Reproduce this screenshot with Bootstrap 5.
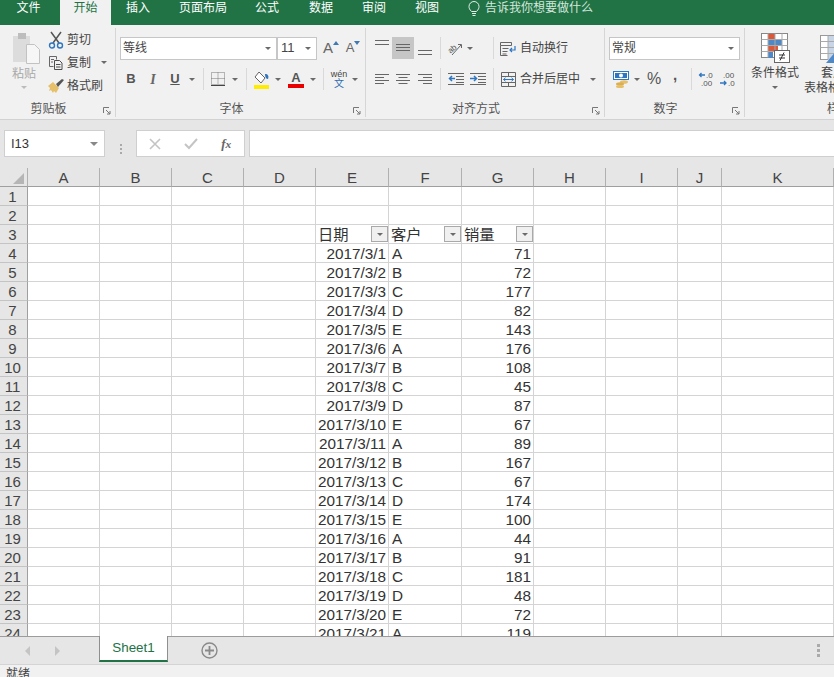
<!DOCTYPE html>
<html lang="zh">
<head>
<meta charset="utf-8">
<title>Excel</title>
<link href="https://cdn.jsdelivr.net/npm/bootstrap@5.3.0/dist/css/bootstrap.min.css" rel="stylesheet">
<style>
html,body{height:100%;}
body{width:834px;height:677px;overflow:hidden;font-family:"Liberation Sans","Noto Sans CJK SC",sans-serif;font-size:12px;color:#444;background:#fff;}
svg{display:block;flex:none;}
.xwin{height:677px;}
.xtabs{height:25px;background:#217346;color:#fff;line-height:15px;flex:none;}
.xtabs>div{text-align:center;padding-top:1px;}
.t1{width:57px;margin-right:3px;}.t2{width:51px;background:#f1f1f1;color:#217346;}.t3{width:54px;}.t4{width:76px;}.t5{width:52px;}.t6{width:56px;}.t7{width:50px;}.t8{width:56px;}
.xtell{margin-left:13px;color:#d5e6dc;gap:5px;}
.xrib{height:95px;background:#f1f1f1;border-bottom:1px solid #d2d2d2;flex:none;overflow:hidden;}
.grp{height:89px;margin-top:3px;border-right:1px solid #d6d6d6;flex:none;position:relative;}
.g1{width:116px;}.g2{width:250px;padding-left:4px;}.g3{width:239px;padding-left:5px;}.g4{width:140px;padding-left:4px;}.g5{width:200px;border-right:0;}
.gbody{height:72px;}
.glabel{height:17px;line-height:19px;text-align:center;padding-right:18px;color:#555;}
.g2 .glabel,.g4 .glabel{padding-right:22px;}
.g3 .glabel{padding-right:23px;}
.g5 .glabel{text-align:left;padding-left:82px;}
.launch{position:absolute;right:4px;bottom:2px;}
.r1{height:22px;margin-top:9px;}
.r2{height:22px;margin-top:9px;}
.slot{display:flex;align-items:center;justify-content:center;height:22px;flex:none;}
.s8{width:8px;}.s10{width:10px;}.s12{width:12px;}.s14{width:14px;}.s16{width:16px;}.s20{width:20px;}.s21{width:21px;}.s22{width:22px;}.s23{width:23px;}.s24{width:24px;}.s26{width:26px;}
.on{background:#c6c6c6;}
.sep{width:1px;height:22px;background:#d9d9d9;}
.tri{width:0;height:0;border-left:3px solid transparent;border-right:3px solid transparent;border-top:3px solid #6a6a6a;flex:none;}
.tri.dim{border-top-color:#bbb;}
.tri.big{border-left-width:4px;border-right-width:4px;border-top-width:4px;border-top-color:#888;}
.xsel{height:23px;background:#fff;border:1px solid #c6c6c6;padding:0 5px 0 2px;line-height:20px;flex:none;}
.fs1{width:157px;}.fs2{width:40px;padding-left:3px;margin-left:0;font-size:13px;}.fs3{width:131px;}
.paste{width:48px;color:#a9a9a9;padding-left:0;}
.clipr{margin-top:4px;margin-left:3px;}
.pastext{margin-top:3px;line-height:15px;}
.pastri{margin-top:4px;}
.clipcol{gap:0;}
.cliprow{height:23px;gap:3px;font-size:12px;}
.copyarr{margin-left:7px;}
.bt{font-size:13px;font-weight:700;color:#555;}
.it{font-family:"Liberation Serif",serif;font-style:italic;font-size:14px;font-weight:700;color:#666;}
.ul{text-decoration:underline;font-size:13px;font-weight:700;color:#555;}
.aup{font-size:15px;color:#666;line-height:22px;width:22px;margin-left:3px;}
.adn{font-size:13px;color:#666;line-height:22px;width:22px;}
.wen{font-size:9px;line-height:9px;text-align:center;color:#444;}
.wen b{display:block;font-weight:400;color:#2b6cb0;font-size:10px;line-height:10px;}
.lbtxt{margin-left:1px;white-space:nowrap;}
.lbgap{margin-left:15px;}
.arrgap{margin-left:9px;}
.pct{font-size:16px;color:#555;}
.cma{font-size:15px;font-weight:700;color:#555;line-height:14px;padding-bottom:8px;}
.cfcol{width:58px;margin-left:1px;text-align:center;line-height:15px;padding-top:5px;}
.cfcol svg{margin:0 auto 3px;}
.cfarrow{margin:5px auto 0;}
.tbcol{width:100px;line-height:15px;padding-top:7px;white-space:nowrap;}
.tbcol svg{margin-left:16px;margin-bottom:3px;}
.tb1{padding-left:17px;}
.xfbar{height:48px;background:#e6e6e6;padding-top:10px;flex:none;}
.fbox{height:27px;background:#fff;border:1px solid #cfcfcf;flex:none;}
.fname{width:101px;margin-left:4px;padding:0 6px 0 6px;font-size:13px;color:#333;}
.fdots{width:31px;gap:2px;flex:none;}
.fdots i{width:2px;height:2px;background:#aaa;display:block;}
.ffx{width:109px;}
.fslot{width:36px;}
.ftx{font-family:"Liberation Serif",serif;font-style:italic;font-weight:700;font-size:13px;color:#666;}
.finput{width:589px;margin-left:4px;flex:none;}
.xgrid{flex:1 1 0;min-height:0;overflow:hidden;background:#fff;}
.xl{width:834px;table-layout:fixed;border-collapse:separate;border-spacing:0;margin:0;font-size:15.3px;color:#333;line-height:16px;}
.xl>*>tr{height:19px;}
.xl>*>tr>*{height:19px;padding:2px 2px 0 3px;border:0;border-right:1px solid #d4d4d4;border-bottom:1px solid #d4d4d4;box-sizing:border-box;overflow:visible;white-space:nowrap;font-weight:400;background:#fff;box-shadow:none;vertical-align:middle;}
.xl>tbody>tr>td.n{text-align:right;padding-left:0;}
.xl>thead>tr>th{background:#e6e6e6;border-right:1px solid #b0b0b0;border-bottom:1px solid #9f9f9f;text-align:center;font-size:15px;color:#444;padding:2px 0 0;}
.xl>tbody>tr>th{background:#e6e6e6;border-right:1px solid #9f9f9f;border-bottom:1px solid #c4c4c4;text-align:center;font-size:15px;color:#444;padding:2px 2px 0 0;}
.c0{width:28px;}.c1{width:72px;}.c2{width:73px;}.c3{width:44px;}.c4{width:112px;}
.corner{margin:0 0 0 13px;}
.xl>tbody>tr>td.hd{padding:0 0 0 2px;}
.fcell{line-height:16px;height:18px;}
.fcell>span:first-child{padding-top:2px;}
.fbtn{width:17px;height:16px;background:#f0f0f0;border:1px solid #a9a9a9;display:flex;align-items:center;justify-content:center;flex:none;}
.xsheets{height:28px;background:#e6e6e6;border-top:1px solid #9c9c9c;flex:none;}
.navs{width:99px;padding-left:25px;gap:23px;}
.stab{width:69px;height:26px;margin-top:-1px;background:#fff;border-left:1px solid #8f8f8f;border-right:1px solid #8f8f8f;border-bottom:2px solid #217346;color:#217346;font-size:13.4px;text-align:center;line-height:24px;flex:none;}
.addsh{margin-left:33px;}
.vdots{margin-left:auto;margin-right:14px;gap:2px;}
.vdots i{width:3px;height:3px;background:#aaa;display:block;}
.xstatus{height:13px;background:#f1f1f1;border-top:1px solid #d4d4d4;flex:none;overflow:hidden;padding:2px 0 0 6px;line-height:15px;color:#444;}
</style>
</head>
<body>
<div class="xwin d-flex flex-column">
  <div class="xtabs d-flex">
    <div class="t1">文件</div><div class="t2">开始</div><div class="t3">插入</div><div class="t4">页面布局</div><div class="t5">公式</div><div class="t6">数据</div><div class="t7">审阅</div><div class="t8">视图</div>
    <div class="xtell d-flex">
      <svg width="12" height="16" viewBox="0 0 12 16" fill="none" stroke="#e4efe8"><path d="M3.5 10.5C1.500 8.500 1 7 1 5.500a5 5 0 0 1 10 0c0 1.500-.5 3-2.500 5zM4 12.500h4M4.500 14.500h3"/></svg>
      <span>告诉我你想要做什么</span>
    </div>
  </div>

  <div class="xrib d-flex">
    <div class="grp g1 d-flex flex-column">
      <div class="gbody d-flex">
        <div class="paste d-flex flex-column align-items-center">
          <svg class="clipr" width="30" height="32" viewBox="0 0 30 32"><rect x="2" y="4" width="17" height="26" fill="#dcdcdc"/><rect x="7" y="1" width="8" height="6" fill="#bdbdbd"/><path d="M15.500 12.500h8l5 5v14h-13z" fill="#f6f6f6" stroke="#c2c2c2"/></svg>
          <div class="pastext">粘贴</div>
          <div class="tri dim pastri"></div>
        </div>
        <div class="clipcol d-flex flex-column">
          <div class="cliprow d-flex align-items-center">
            <svg width="16" height="18" viewBox="0 0 16 18" fill="none"><path d="M3 1l8 11M13 1L5 12" stroke="#555" stroke-width="1.500"/><circle cx="4" cy="14.500" r="2.500" stroke="#2f76c0" stroke-width="1.400"/><circle cx="12" cy="14.500" r="2.500" stroke="#2f76c0" stroke-width="1.400"/></svg>
            <span>剪切</span>
          </div>
          <div class="cliprow d-flex align-items-center">
            <svg width="16" height="16" viewBox="0 0 16 16" fill="none" stroke="#666"><path d="M1.500 1.500h7v3M1.500 1.500v10h4M3 4.500h3M3 7h2"/><path d="M6.500 5.500h5l2.500 2.500v6.500H6.500zM8 9.500h4.500M8 12h4.500" stroke="#4d4d4d"/></svg>
            <span>复制</span>
            <i class="tri copyarr"></i>
          </div>
          <div class="cliprow d-flex align-items-center">
            <svg width="16" height="16" viewBox="0 0 16 16"><path d="M0 8l5-4 6 6-3 5-2-2-1 2-2-3-2 1 1-3-2-2z" fill="#e6bf6a"/><path d="M8 6l6-5 2 1-6 7z" fill="#555"/></svg>
            <span>格式刷</span>
          </div>
        </div>
      </div>
      <div class="glabel">剪贴板</div>
      <svg class="launch" width="8" height="8" viewBox="0 0 8 8" fill="none" stroke="#777"><path d="M.5 6V.5H6"/><path d="M3 3l4 4M7 4v3H4"/></svg>
    </div>

    <div class="grp g2 d-flex flex-column">
      <div class="gbody">
        <div class="r1 d-flex align-items-center">
          <div class="xsel fs1 d-flex align-items-center justify-content-between"><span>等线</span><i class="tri"></i></div>
          <div class="xsel fs2 d-flex align-items-center justify-content-between"><span>11</span><i class="tri"></i></div>
          <div class="aup d-flex justify-content-center"><span>A</span><svg class="mt-1" width="6" height="5" viewBox="0 0 6 5"><path d="M0 4h6L3 0z" fill="#3f78b5"/></svg></div>
          <div class="adn d-flex justify-content-center"><span>A</span><svg class="mt-1" width="6" height="5" viewBox="0 0 6 5"><path d="M0 0h6L3 4z" fill="#3f78b5"/></svg></div>
        </div>
        <div class="r2 d-flex align-items-center">
          <div class="slot s22 bt">B</div><div class="slot s22 it">I</div><div class="slot s22 ul">U</div><div class="slot s12"><i class="tri"></i></div>
          <div class="slot s10"><i class="sep"></i></div>
          <div class="slot s20"><svg width="14" height="14" viewBox="0 0 14 14" fill="none" stroke="#777" stroke-dasharray="1 1"><path d="M.5.500h13v12h-13zM7 .5v12M.5 6.500h13"/><path d="M0 13.500h14" stroke-dasharray="none" stroke="#444"/></svg></div>
          <div class="slot s14"><i class="tri"></i></div>
          <div class="slot s8"><i class="sep"></i></div>
          <div class="slot s22"><svg width="17" height="19" viewBox="0 0 17 19"><path d="M6 2l6 6-4 5-6-6z" fill="#fff" stroke="#666"/><path d="M12 4c3 0 4 2 3 5-2 0-3-2-3-5z" fill="#2f76c0"/><rect x="1" y="15" width="15" height="4" fill="#ffec00"/></svg></div>
          <div class="slot s12"><i class="tri"></i></div>
          <div class="slot s24 flex-column"><span class="bt lh-1">A</span><svg width="16" height="4" viewBox="0 0 16 4"><rect width="16" height="4" fill="#e80000"/></svg></div>
          <div class="slot s10"><i class="tri"></i></div>
          <div class="slot s10"><i class="sep"></i></div>
          <div class="slot s22"><div class="wen">wén<b>文</b></div></div>
          <div class="slot s10"><i class="tri"></i></div>
        </div>
      </div>
      <div class="glabel">字体</div>
      <svg class="launch" width="8" height="8" viewBox="0 0 8 8" fill="none" stroke="#777"><path d="M.5 6V.5H6"/><path d="M3 3l4 4M7 4v3H4"/></svg>
    </div>

    <div class="grp g3 d-flex flex-column">
      <div class="gbody">
        <div class="r1 d-flex align-items-center">
          <div class="slot s21"><svg width="14" height="22" viewBox="0 0 14 22" stroke="#666"><path d="M0 3.500h14M0 7.500h14"/></svg></div>
          <div class="slot s22 on"><svg width="14" height="22" viewBox="0 0 14 22" stroke="#666"><path d="M0 7.500h14M0 10.500h14M0 13.500h14"/></svg></div>
          <div class="slot s22"><svg width="14" height="22" viewBox="0 0 14 22" stroke="#666"><path d="M0 13.500h14M0 17.500h14"/></svg></div>
          <div class="slot s8"><i class="sep"></i></div>
          <div class="slot s22"><svg width="16" height="15" viewBox="0 0 16 15"><text x="1" y="10" transform="rotate(-40 6 8)" font-size="8" font-family="Liberation Sans" fill="#555">ab</text><path d="M5 14L14 4M11 3.500h3.500V7" fill="none" stroke="#666"/></svg></div>
          <div class="slot s8"><i class="tri"></i></div>
          <div class="slot s8 lbgap"><i class="sep"></i></div>
          <div class="slot s22"><svg width="16" height="15" viewBox="0 0 16 15" fill="none"><path d="M.5 1.500h11v3H.5zM.5 4.500v10h7M2.500 7.500h6M2.500 10.500h5M2.500 13h4" stroke="#666"/><path d="M15 5v4h-5M12 7l-2 2 2 2" stroke="#2f76c0" stroke-width="1.200"/></svg></div>
          <div class="lbtxt">自动换行</div>
        </div>
        <div class="r2 d-flex align-items-center">
          <div class="slot s21"><svg width="14" height="10" viewBox="0 0 14 10" stroke="#666"><path d="M0 .5h14M0 3.500h9M0 6.500h14M0 9.500h9"/></svg></div>
          <div class="slot s22"><svg width="14" height="10" viewBox="0 0 14 10" stroke="#666"><path d="M0 .5h14M2.500 3.500h9M0 6.500h14M2.500 9.500h9"/></svg></div>
          <div class="slot s22"><svg width="14" height="10" viewBox="0 0 14 10" stroke="#666"><path d="M0 .5h14M5 3.500h9M0 6.500h14M5 9.500h9"/></svg></div>
          <div class="slot s8"><i class="sep"></i></div>
          <div class="slot s23"><svg width="16" height="12" viewBox="0 0 16 12" fill="none"><path d="M0 .5h16M8 3.500h8M8 6.500h8M8 9.500h8M0 11.500h16" stroke="#666"/><path d="M7 5.500H1.500M4 3L1.500 5.500 4 8" stroke="#2f76c0" stroke-width="1.500"/></svg></div>
          <div class="slot s22"><svg width="16" height="12" viewBox="0 0 16 12" fill="none"><path d="M0 .5h16M8 3.500h8M8 6.500h8M8 9.500h8M0 11.500h16" stroke="#666"/><path d="M0 5.500h6M4 3l2.500 2.500L4 8" stroke="#2f76c0" stroke-width="1.500"/></svg></div>
          <div class="slot s8"><i class="sep"></i></div>
          <div class="slot s22"><svg width="15" height="15" viewBox="0 0 15 15" fill="none"><path d="M.5.500h14v14H.5zM.5 4.500h14M.5 10.500h14M7.500.5v4M7.500 10.500v4" stroke="#666"/><path d="M2.500 7.500h10M4.500 5.800l-2 1.700 2 1.700M10.500 5.800l2 1.700-2 1.700" stroke="#2f76c0"/></svg></div>
          <div class="lbtxt">合并后居中</div>
          <div class="slot s8 arrgap"><i class="tri"></i></div>
        </div>
      </div>
      <div class="glabel">对齐方式</div>
      <svg class="launch" width="8" height="8" viewBox="0 0 8 8" fill="none" stroke="#777"><path d="M.5 6V.5H6"/><path d="M3 3l4 4M7 4v3H4"/></svg>
    </div>

    <div class="grp g4 d-flex flex-column">
      <div class="gbody">
        <div class="r1 d-flex align-items-center">
          <div class="xsel fs3 d-flex align-items-center justify-content-between"><span>常规</span><i class="tri"></i></div>
        </div>
        <div class="r2 d-flex align-items-center">
          <div class="slot s24"><svg width="17" height="17" viewBox="0 0 17 17"><rect x=".5" y=".5" width="15" height="8" fill="#fff" stroke="#2f76c0"/><rect x="2" y="2" width="12" height="5" fill="#2f76c0"/><circle cx="8" cy="4.500" r="2" fill="#fff"/><ellipse cx="11" cy="11" rx="4" ry="1.800" fill="#e6bf6a"/><ellipse cx="7" cy="13" rx="4" ry="1.800" fill="#dcae4f"/><ellipse cx="7" cy="15.500" rx="4" ry="1.500" fill="#e6bf6a"/></svg></div>
          <div class="slot s8"><i class="tri"></i></div>
          <div class="slot s26 pct">%</div>
          <div class="slot s16 cma">,</div>
          <div class="slot s16"><i class="sep"></i></div>
          <div class="slot s16"><svg width="18" height="16" viewBox="0 0 18 16"><path d="M7 4H1.500M3.500 2L1.500 4l2 2" fill="none" stroke="#2f76c0" stroke-width="1.300"/><text x="8" y="7" font-size="8" font-family="Liberation Sans" fill="#555">.0</text><text x="3" y="15" font-size="8" font-family="Liberation Sans" fill="#555">.00</text></svg></div>
          <div class="slot s26"><svg width="18" height="16" viewBox="0 0 18 16"><text x="4" y="7" font-size="8" font-family="Liberation Sans" fill="#555">.00</text><path d="M1 12h6M5 10l2 2-2 2" fill="none" stroke="#2f76c0" stroke-width="1.300"/><text x="9" y="15" font-size="8" font-family="Liberation Sans" fill="#555">.0</text></svg></div>
        </div>
      </div>
      <div class="glabel">数字</div>
      <svg class="launch" width="8" height="8" viewBox="0 0 8 8" fill="none" stroke="#777"><path d="M.5 6V.5H6"/><path d="M3 3l4 4M7 4v3H4"/></svg>
    </div>

    <div class="grp g5 d-flex flex-column">
      <div class="gbody d-flex">
        <div class="cfcol">
          <svg width="29" height="30" viewBox="0 0 29 30"><rect x=".5" y=".5" width="26" height="24" fill="#fff" stroke="#888"/><rect x="7" y="1" width="7" height="5.500" fill="#d9593a"/><rect x="7" y="7" width="14" height="6" fill="#4e88c6"/><rect x="7" y="13" width="10" height="5.500" fill="#d9593a"/><rect x="7" y="19" width="5" height="6" fill="#4e88c6"/><path d="M7 .5v24M14 .5v24M21 .5v24M.5 6.500h26M.5 12.500h26M.5 18.500h26" stroke="#aaa" fill="none"/><rect x="13.500" y="17.500" width="15" height="12" fill="#fff" stroke="#666"/><path d="M18 22h6M18 25h6M19 27.500l4-8" stroke="#333" fill="none"/></svg>
          <div>条件格式</div>
          <div class="tri cfarrow"></div>
        </div>
        <div class="tbcol">
          <svg width="30" height="28" viewBox="0 0 30 28"><rect x=".5" y=".5" width="29" height="24" fill="#fff" stroke="#999"/><rect x="8" y="1" width="22" height="24" fill="#c8d5e6"/><path d="M8 .5v24M15 .5v24M22 .5v24M.5 6.500h29M.5 12.500h29M.5 18.500h29" stroke="#aaa" fill="none"/><path d="M6 28L16 16v12z" fill="#4e88c6"/></svg>
          <div class="tb1">套用</div>
          <div>表格格式</div>
        </div>
      </div>
      <div class="glabel">样式</div>
    </div>
  </div>

  <div class="xfbar d-flex">
    <div class="fbox fname d-flex align-items-center justify-content-between"><span>I13</span><i class="tri big"></i></div>
    <div class="fdots d-flex flex-column align-items-center justify-content-center"><i></i><i></i><i></i></div>
    <div class="fbox ffx d-flex align-items-center">
      <div class="fslot d-flex justify-content-center"><svg width="12" height="12" viewBox="0 0 12 12" stroke="#c4c4c4" stroke-width="1.600"><path d="M1 1l10 10M11 1L1 11"/></svg></div>
      <div class="fslot d-flex justify-content-center"><svg width="14" height="12" viewBox="0 0 14 12" fill="none" stroke="#c4c4c4" stroke-width="2"><path d="M1 6l4 4 8-9"/></svg></div>
      <div class="fslot ftx text-center">f<small>x</small></div>
    </div>
    <div class="fbox finput"></div>
  </div>

  <div class="xgrid">
    <table class="table xl">
      <colgroup><col class="c0"><col class="c1"><col class="c1"><col class="c1"><col class="c1"><col class="c2"><col class="c2"><col class="c1"><col class="c1"><col class="c1"><col class="c3"><col class="c4"></colgroup>
      <thead><tr><th><svg class="corner" width="11" height="11" viewBox="0 0 11 11"><path d="M11 0v11H0z" fill="#b5b5b5"/></svg></th><th>A</th><th>B</th><th>C</th><th>D</th><th>E</th><th>F</th><th>G</th><th>H</th><th>I</th><th>J</th><th>K</th></tr></thead>
      <tbody>
        <tr><th>1</th><td></td><td></td><td></td><td></td><td></td><td></td><td></td><td></td><td></td><td></td><td></td></tr>
        <tr><th>2</th><td></td><td></td><td></td><td></td><td></td><td></td><td></td><td></td><td></td><td></td><td></td></tr>
        <tr><th>3</th><td></td><td></td><td></td><td></td><td class="hd"><div class="fcell d-flex justify-content-between align-items-center"><span>日期</span><span class="fbtn"><i class="tri"></i></span></div></td><td class="hd"><div class="fcell d-flex justify-content-between align-items-center"><span>客户</span><span class="fbtn"><i class="tri"></i></span></div></td><td class="hd"><div class="fcell d-flex justify-content-between align-items-center"><span>销量</span><span class="fbtn"><i class="tri"></i></span></div></td><td></td><td></td><td></td><td></td></tr>
        <tr><th>4</th><td></td><td></td><td></td><td></td><td class="n">2017/3/1</td><td>A</td><td class="n">71</td><td></td><td></td><td></td><td></td></tr>
        <tr><th>5</th><td></td><td></td><td></td><td></td><td class="n">2017/3/2</td><td>B</td><td class="n">72</td><td></td><td></td><td></td><td></td></tr>
        <tr><th>6</th><td></td><td></td><td></td><td></td><td class="n">2017/3/3</td><td>C</td><td class="n">177</td><td></td><td></td><td></td><td></td></tr>
        <tr><th>7</th><td></td><td></td><td></td><td></td><td class="n">2017/3/4</td><td>D</td><td class="n">82</td><td></td><td></td><td></td><td></td></tr>
        <tr><th>8</th><td></td><td></td><td></td><td></td><td class="n">2017/3/5</td><td>E</td><td class="n">143</td><td></td><td></td><td></td><td></td></tr>
        <tr><th>9</th><td></td><td></td><td></td><td></td><td class="n">2017/3/6</td><td>A</td><td class="n">176</td><td></td><td></td><td></td><td></td></tr>
        <tr><th>10</th><td></td><td></td><td></td><td></td><td class="n">2017/3/7</td><td>B</td><td class="n">108</td><td></td><td></td><td></td><td></td></tr>
        <tr><th>11</th><td></td><td></td><td></td><td></td><td class="n">2017/3/8</td><td>C</td><td class="n">45</td><td></td><td></td><td></td><td></td></tr>
        <tr><th>12</th><td></td><td></td><td></td><td></td><td class="n">2017/3/9</td><td>D</td><td class="n">87</td><td></td><td></td><td></td><td></td></tr>
        <tr><th>13</th><td></td><td></td><td></td><td></td><td class="n">2017/3/10</td><td>E</td><td class="n">67</td><td></td><td></td><td></td><td></td></tr>
        <tr><th>14</th><td></td><td></td><td></td><td></td><td class="n">2017/3/11</td><td>A</td><td class="n">89</td><td></td><td></td><td></td><td></td></tr>
        <tr><th>15</th><td></td><td></td><td></td><td></td><td class="n">2017/3/12</td><td>B</td><td class="n">167</td><td></td><td></td><td></td><td></td></tr>
        <tr><th>16</th><td></td><td></td><td></td><td></td><td class="n">2017/3/13</td><td>C</td><td class="n">67</td><td></td><td></td><td></td><td></td></tr>
        <tr><th>17</th><td></td><td></td><td></td><td></td><td class="n">2017/3/14</td><td>D</td><td class="n">174</td><td></td><td></td><td></td><td></td></tr>
        <tr><th>18</th><td></td><td></td><td></td><td></td><td class="n">2017/3/15</td><td>E</td><td class="n">100</td><td></td><td></td><td></td><td></td></tr>
        <tr><th>19</th><td></td><td></td><td></td><td></td><td class="n">2017/3/16</td><td>A</td><td class="n">44</td><td></td><td></td><td></td><td></td></tr>
        <tr><th>20</th><td></td><td></td><td></td><td></td><td class="n">2017/3/17</td><td>B</td><td class="n">91</td><td></td><td></td><td></td><td></td></tr>
        <tr><th>21</th><td></td><td></td><td></td><td></td><td class="n">2017/3/18</td><td>C</td><td class="n">181</td><td></td><td></td><td></td><td></td></tr>
        <tr><th>22</th><td></td><td></td><td></td><td></td><td class="n">2017/3/19</td><td>D</td><td class="n">48</td><td></td><td></td><td></td><td></td></tr>
        <tr><th>23</th><td></td><td></td><td></td><td></td><td class="n">2017/3/20</td><td>E</td><td class="n">72</td><td></td><td></td><td></td><td></td></tr>
        <tr><th>24</th><td></td><td></td><td></td><td></td><td class="n">2017/3/21</td><td>A</td><td class="n">119</td><td></td><td></td><td></td><td></td></tr>
      </tbody>
    </table>
  </div>

  <div class="xsheets d-flex">
    <div class="navs d-flex align-items-center">
      <svg width="6" height="10" viewBox="0 0 6 10"><path d="M5 0v10L0 5z" fill="#c4c4c4"/></svg>
      <svg width="6" height="10" viewBox="0 0 6 10"><path d="M1 0v10l5-5z" fill="#c4c4c4"/></svg>
    </div>
    <div class="stab">Sheet1</div>
    <div class="addsh d-flex align-items-center"><svg width="17" height="17" viewBox="0 0 17 17" fill="none" stroke="#8a8a8a"><circle cx="8.500" cy="8.500" r="7.500" stroke-width="1.400"/><path d="M8.500 4v9M4 8.500h9" stroke-width="1.800"/></svg></div>
    <div class="vdots d-flex flex-column justify-content-center"><i></i><i></i><i></i></div>
  </div>
  <div class="xstatus">就绪</div>
</div>
<script src="https://cdn.jsdelivr.net/npm/bootstrap@5.3.0/dist/js/bootstrap.bundle.min.js"></script>
</body>
</html>
